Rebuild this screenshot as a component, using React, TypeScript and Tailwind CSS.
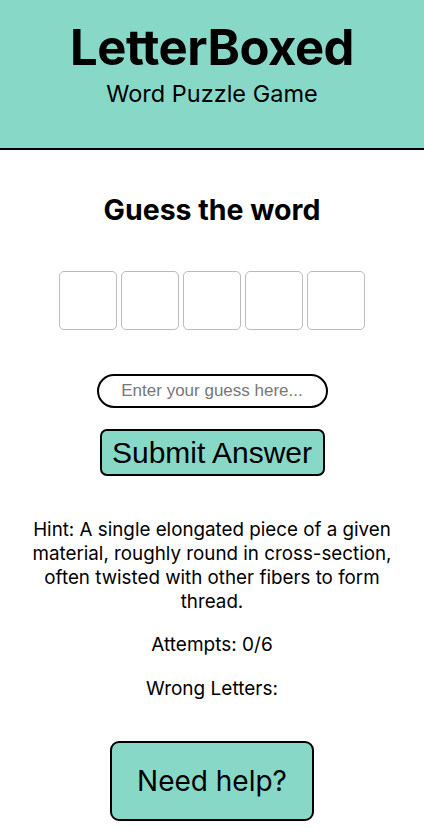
export default function App() {
  const font = { fontFamily: 'Inter, "Noto Sans", sans-serif' };
  return (
    <div className="min-h-[828px] bg-white text-black" style={font}>
      <header className="h-[150px] bg-[#88d8c8] border-b-2 border-black flex flex-col items-center pt-[20px]">
        <h1 className="text-[49px] leading-[56px] font-bold tracking-[-0.5px]">LetterBoxed</h1>
        <p className="text-[23.5px] leading-[30px] mt-[3px]">Word Puzzle Game</p>
      </header>
      <main className="flex flex-col items-center">
        <h2 className="mt-[42px] text-[28.5px] leading-[36px] font-bold">Guess the word</h2>
        <div className="mt-[43px] flex gap-[4px]">
          {[0, 1, 2, 3, 4].map((i) => (
            <div key={i} className="w-[58px] h-[59px] border border-[#bbbbbb] rounded-[5px]" />
          ))}
        </div>
        <input
          className="mt-[44px] w-[231px] h-[34px] border-2 border-black rounded-full text-center text-[17px] outline-none placeholder:text-[#777]"
          style={{ fontFamily: '"Liberation Sans", Arial, sans-serif' }}
          placeholder="Enter your guess here..."
        />
        <button
          className="mt-[21px] w-[225px] h-[47px] bg-[#88d8c8] border-2 border-black rounded-[7px] text-[30px] leading-none"
          style={{ fontFamily: '"Liberation Sans", Arial, sans-serif' }}
        >
          Submit Answer
        </button>
        <p className="mt-[42px] px-[24px] text-center text-[18.8px] leading-[24px]">
          Hint: A single elongated piece of a given material, roughly round in cross-section, often twisted with other fibers to form thread.
        </p>
        <p className="mt-[19px] text-[19px] leading-[24px]">Attempts: 0/6</p>
        <p className="mt-[20px] text-[19px] leading-[24px]">Wrong Letters:</p>
        <button className="mt-[40px] w-[204px] h-[80px] bg-[#88d8c8] border-2 border-black rounded-[9px] text-[28px]">
          Need help?
        </button>
      </main>
    </div>
  );
}
